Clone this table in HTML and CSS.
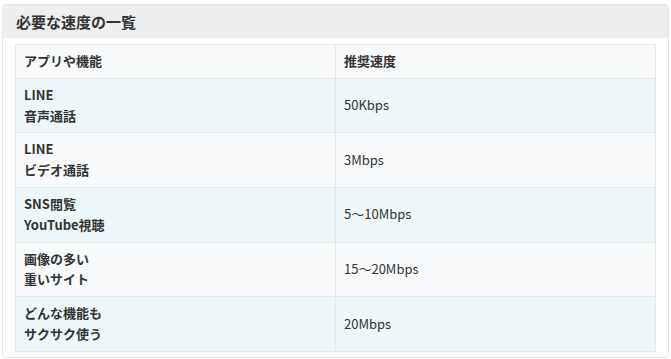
FILE: index.html
```html
<!DOCTYPE html>
<html lang="ja">
<head>
<meta charset="utf-8">
<link rel="stylesheet" href="styles.css">
</head>
<body>
<div class="card">
  <div class="card-head">必要な速度の一覧</div>
  <div class="card-body">
    <table class="speed">
      <thead>
        <tr><th>アプリや機能</th><th>推奨速度</th></tr>
      </thead>
      <tbody>
        <tr><th>LINE<br>音声通話</th><td>50Kbps</td></tr>
        <tr><th>LINE<br>ビデオ通話</th><td>3Mbps</td></tr>
        <tr><th>SNS閲覧<br>YouTube視聴</th><td>5～10Mbps</td></tr>
        <tr><th>画像の多い<br>重いサイト</th><td>15～20Mbps</td></tr>
        <tr><th>どんな機能も<br>サクサク使う</th><td>20Mbps</td></tr>
      </tbody>
    </table>
  </div>
</div>
</body>
</html>
```

FILE: styles.css
```css
html, body {
  margin: 0;
  padding: 0;
  background: #ffffff;
}
body {
  padding: 4px 2px 0 2px;
  font-family: "Noto Sans CJK JP", "Noto Sans", sans-serif;
  color: #333333;
}
.card {
  border: 1px solid #e6e6e6;
  border-radius: 4px;
  background: #ffffff;
  overflow: hidden;
}
.card-head {
  background: #eeeeee;
  height: 33px;
  line-height: 33px;
  padding: 0 13px;
  font-size: 15px;
  font-weight: bold;
  color: #333333;
}
.card-body {
  padding: 6px 12px 5px 12px;
}
.speed {
  width: 100%;
  border-collapse: collapse;
  font-size: 13px;
  line-height: 1.6;
}
.speed th, .speed td {
  border: 1px solid #e8e8e8;
  padding: 6px 8px;
  text-align: left;
  vertical-align: middle;
  color: #333333;
}
.speed th {
  font-weight: bold;
  width: 50%;
}
.speed td {
  font-weight: normal;
}
.speed thead tr {
  background: #f8fafc;
}
.speed tbody tr:nth-child(odd) {
  background: #eef7f9;
}
.speed tbody tr:nth-child(even) {
  background: #f8fafc;
}
```
